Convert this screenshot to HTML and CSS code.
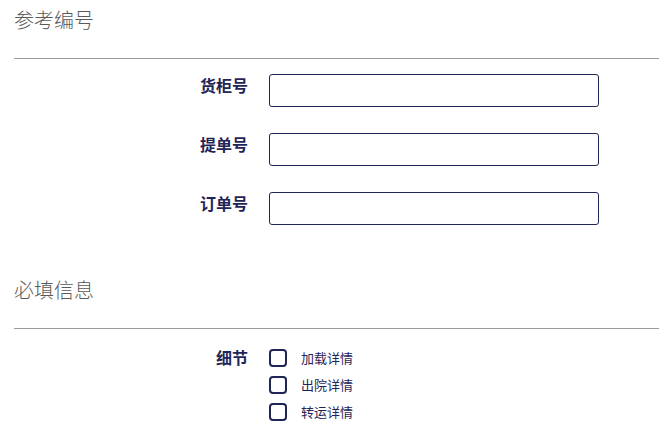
FILE: index.html
```html
<!DOCTYPE html>
<html lang="zh-CN">
<head>
  <meta charset="UTF-8">
  <meta name="viewport" content="width=device-width, initial-scale=1.0">
  <title>参考编号</title>
  <link rel="stylesheet" href="styles.css">
</head>
<body>
  <div class="section">
    <div class="legend">参考编号</div>
    <div class="fields">
      <div class="row">
        <label class="label" for="container-no">货柜号</label>
        <input class="text-input" type="text" id="container-no">
      </div>
      <div class="row">
        <label class="label" for="bl-no">提单号</label>
        <input class="text-input" type="text" id="bl-no">
      </div>
      <div class="row">
        <label class="label" for="order-no">订单号</label>
        <input class="text-input" type="text" id="order-no">
      </div>
    </div>
  </div>
  <div class="section">
    <div class="legend">必填信息</div>
    <div class="fields">
      <div class="row">
        <div class="label label-checks">细节</div>
        <div class="checks">
          <label class="check"><input type="checkbox"> 加载详情</label>
          <label class="check"><input type="checkbox"> 出院详情</label>
          <label class="check"><input type="checkbox"> 转运详情</label>
        </div>
      </div>
    </div>
  </div>
</body>
</html>
```

FILE: styles.css
```css
body {
  font-family: 'Noto Sans CJK SC', 'Noto Sans', sans-serif;
  background: #fff;
  color: #1f2557;
  margin: 0;
  padding: 0 0 0 14px;
}
.section {
  margin-bottom: 45px;
}
.section:last-child {
  margin-bottom: 0;
}
.legend {
  font-size: 20px;
  line-height: 28px;
  padding-top: 6px;
  padding-bottom: 24px;
  color: #5a5a5a;
  font-weight: 300;
  border-bottom: 1px solid #9b9b9b;
}
.fields {
  padding-top: 15px;
  display: flex;
  flex-direction: column;
  gap: 26px;
}
.row {
  display: grid;
  grid-template-columns: 234px 330px;
  column-gap: 21px;
  align-items: start;
}
.label {
  text-align: right;
  font-weight: 700;
  font-size: 16px;
  line-height: 22px;
  color: #1f2557;
}
.label-checks {
  padding-top: 2px;
}
.text-input {
  box-sizing: border-box;
  width: 330px;
  height: 33px;
  border: 1px solid #1f2557;
  border-radius: 3px;
  padding: 0 8px;
  font-size: 14px;
  outline: none;
}
.checks {
  display: flex;
  flex-direction: column;
  gap: 9px;
  padding-top: 5px;
}
.check {
  display: flex;
  align-items: center;
  font-size: 13px;
  line-height: 18px;
  color: #1f2557;
}
.check input {
  appearance: none;
  width: 18px;
  height: 18px;
  margin: 0 14px 0 0;
  border: 2px solid #1f2557;
  border-radius: 4px;
  box-sizing: border-box;
}
```
